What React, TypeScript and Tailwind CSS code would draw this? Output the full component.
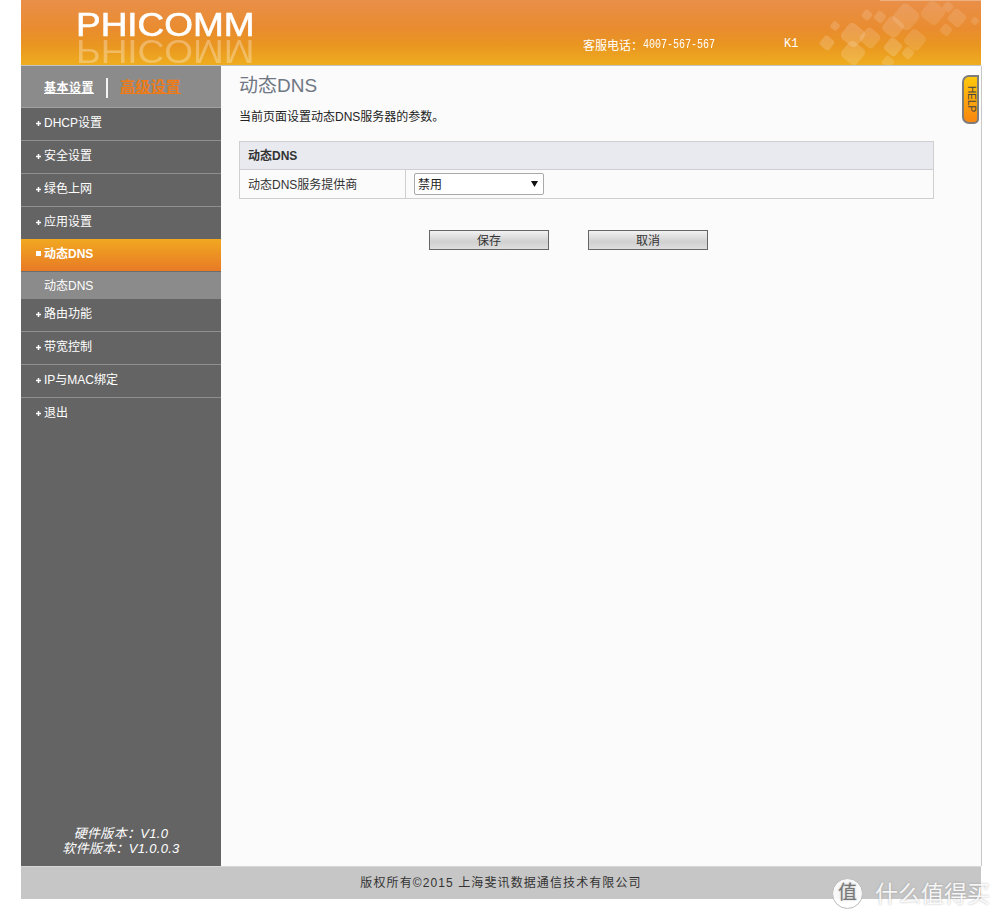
import React from 'react';

const cjk = '[font-family:"Liberation_Sans","Noto_Sans_CJK_SC",sans-serif]';

const menuTop = ['DHCP设置', '安全设置', '绿色上网'];
const menuBottom = ['路由功能', '带宽控制', 'IP与MAC绑定'];

// 加号小图标
function Plus() {
    return (
        <svg width="5" height="5" viewBox="0 0 5 5" className="shrink-0">
            <path d="M0 1.75h1.75V0h1.5v1.75H5v1.5H3.25V5h-1.5V3.25H0z" fill="#fff" />
        </svg>
    );
}

function MenuItem({ label, last }: { label: string; last?: boolean }) {
    return (
        <div className={`flex items-center gap-[3px] pl-[15px] pb-[2px] text-white text-[12px] ${last ? 'h-[32px]' : 'h-[33px] border-b border-[#8f8f8f]'}`}>
            <Plus />
            <span>{label}</span>
        </div>
    );
}

// 头部右侧的装饰方块
function HeaderPattern() {
    const squares = [
        [906, 17, 22, 0.12], [893, 27, 18, 0.14], [880, 17, 10, 0.14], [867, 15, 9, 0.14],
        [835, 26, 8, 0.16], [948, 7, 9, 0.12], [933, 13, 20, 0.1], [957, 18, 15, 0.12],
        [975, 21, 7, 0.12], [946, 30, 10, 0.12], [915, 40, 18, 0.12], [853, 35, 20, 0.16],
        [870, 38, 17, 0.14], [827, 43, 12, 0.18], [853, 53, 20, 0.16], [893, 47, 15, 0.18],
        [908, 53, 10, 0.16], [888, 62, 10, 0.14],
    ];
    return (
        <svg width="240" height="65" viewBox="741 0 240 65" className="absolute right-0 top-0 blur-[0.7px]">
            <rect x="880" y="0" width="101" height="1" fill="#fff" opacity="0.3" />
            {squares.map(([x, y, s, o], i) => (
                <rect key={i} x={x - s / 2} y={y - s / 2} width={s} height={s} rx={s / 4} fill="#fff" opacity={o} transform={`rotate(40 ${x} ${y})`} />
            ))}
        </svg>
    );
}

export default function App() {
    return (
        <div className={`relative h-[920px] w-[1001px] bg-white overflow-hidden ${cjk}`}>
            <div className="ml-[21px] w-[960px]">
                {/* Header */}
                <div className="relative h-[66px] border-b border-[#c4c4c4] bg-[linear-gradient(to_bottom,#e98f49_0%,#e98c2f_45%,#e99620_70%,#efad20_100%)] overflow-hidden">
                    <HeaderPattern />
                    <div className="absolute left-[55px] top-[12px] text-white text-[33px] leading-[26px] [font-family:'Liberation_Sans',sans-serif] [-webkit-text-stroke:0.6px_#fff] [transform:scaleX(1.12)] origin-left">PHICOMM</div>
                    <div className="absolute left-[55px] top-[38px] text-white/30 text-[33px] leading-[26px] [font-family:'Liberation_Sans',sans-serif] [transform:scale(1.12,-1)] origin-left">PHICOMM</div>
                    <div className="absolute left-[562px] top-[37px] flex items-center text-white text-[12px] leading-[18px]">
                        <span>客服电话：</span>
                        <span className="inline-block text-[10px] [font-family:'Liberation_Mono',monospace] [transform:scaleY(1.2)]">4007-567-567</span>
                    </div>
                    <div className="absolute left-[763px] top-[35px] text-white text-[12px] leading-[18px] [font-family:'Liberation_Mono',monospace]">K1</div>
                </div>

                <div className="flex h-[800px] w-[961px]">
                    {/* Sidebar */}
                    <div className="w-[200px] shrink-0 flex flex-col bg-[#646464]">
                        <div className="h-[42px] shrink-0 flex items-center pl-[23px] pt-[2px] bg-[#8b8b8b] border-b border-[#a0a0a0] text-[12px] tracking-[0.5px] font-bold">
                            <a className="text-white underline">基本设置</a>
                            <span className="ml-[12px] w-[2px] h-[20px] bg-[#f4f4f4]" />
                            <a className="ml-[12px] text-[15px] tracking-[0.2px] text-[#ee7b16] underline">高级设置</a>
                        </div>
                        {menuTop.map((m) => (
                            <MenuItem key={m} label={m} />
                        ))}
                        <MenuItem label="应用设置" last={false} />
                        <div className="-mt-[1px] h-[33px] flex items-center gap-[3px] pl-[15px] pb-[3px] border-b border-[#6c6c6c] text-white text-[12px] font-bold bg-[linear-gradient(to_bottom,#f1a820,#e87a26)]">
                            <span className="w-[5px] h-[5px] bg-white shrink-0" />
                            <span>动态DNS</span>
                        </div>
                        <div className="h-[27px] flex items-center pl-[23px] bg-[#8b8b8b] text-white text-[12px]">动态DNS</div>
                        {menuBottom.map((m) => (
                            <MenuItem key={m} label={m} />
                        ))}
                        <MenuItem label="退出" last />
                        <div className="mt-auto pb-[10px] text-center text-white text-[13px] tracking-[0.3px] italic leading-[15px]">
                            <div>硬件版本：V1.0</div>
                            <div>软件版本：V1.0.0.3</div>
                        </div>
                    </div>

                    {/* Content */}
                    <div className="flex-1 bg-[#fbfbfb] border-r border-[#c8c8c8] pl-[18px] pt-[8px]">
                        <h1 className="text-[19px] leading-[24px] text-[#6f7684]">动态DNS</h1>
                        <p className="mt-[9px] text-[12px] leading-[20px] text-[#222]">当前页面设置动态DNS服务器的参数。</p>
                        <div className="mt-[14px] w-[695px] border border-[#cfcfcf] text-[12px] text-[#333]">
                            <div className="h-[28px] pl-[8px] flex items-center bg-[#e9eaf0] border-b border-[#cfcfcf] font-bold">动态DNS</div>
                            <div className="h-[28px] flex items-center">
                                <div className="w-[166px] h-full pl-[8px] pt-[1px] flex items-center border-r border-[#cfcfcf]">动态DNS服务提供商</div>
                                <div className="relative ml-[8px] w-[130px] h-[22px]">
                                    <select className="appearance-none w-full h-full pl-[3px] pt-[1px] bg-white border border-[#a9a9a9] rounded-[2px] text-[12px] text-[#222]">
                                        <option>禁用</option>
                                    </select>
                                    <svg width="7" height="6" viewBox="0 0 7 6" className="absolute right-[6px] top-[8px]">
                                        <path d="M0 0h7L3.5 6z" fill="#111" />
                                    </svg>
                                </div>
                            </div>
                        </div>
                        <div className="mt-[31px] ml-[190px] flex gap-[39px]">
                            <button className="w-[120px] h-[20px] pt-[1px] border border-[#666] text-[12px] text-[#333] bg-[linear-gradient(to_bottom,#f2f2f2,#d0d0d0_60%,#dedede)]">保存</button>
                            <button className="w-[120px] h-[20px] pt-[1px] border border-[#666] text-[12px] text-[#333] bg-[linear-gradient(to_bottom,#f2f2f2,#d0d0d0_60%,#dedede)]">取消</button>
                        </div>
                    </div>
                </div>

                {/* Footer */}
                <div className="h-[33px] bg-[#c6c6c6] border-t border-[#d6d6d6] flex items-center justify-center text-[12px] text-[#333] tracking-[1.1px]">版权所有©2015 上海斐讯数据通信技术有限公司</div>
            </div>

            {/* HELP */}
            <div className="absolute left-[962px] top-[75px] w-[17px] h-[49px] rounded-l-[7px] rounded-r-[5px] rounded-tr-none border-2 border-[#7d7d7d] bg-[linear-gradient(to_bottom,#ffc80a,#f8860f)] flex items-center justify-center">
                <span className="[writing-mode:vertical-rl] text-[10px] leading-none text-[#444]">HELP</span>
            </div>

            {/* 水印 */}
            <div className="absolute left-[832px] top-[878px] flex items-center gap-[12px] text-white [text-shadow:0_0_2px_rgba(120,120,120,0.6)]">
                <div className="w-[31px] h-[31px] rounded-full bg-white/90 border border-[#bbb] flex items-center justify-center text-[#777] text-[19px]">值</div>
                <div className="text-[23px] leading-[30px] text-white/90">什么值得买</div>
            </div>
        </div>
    );
}
